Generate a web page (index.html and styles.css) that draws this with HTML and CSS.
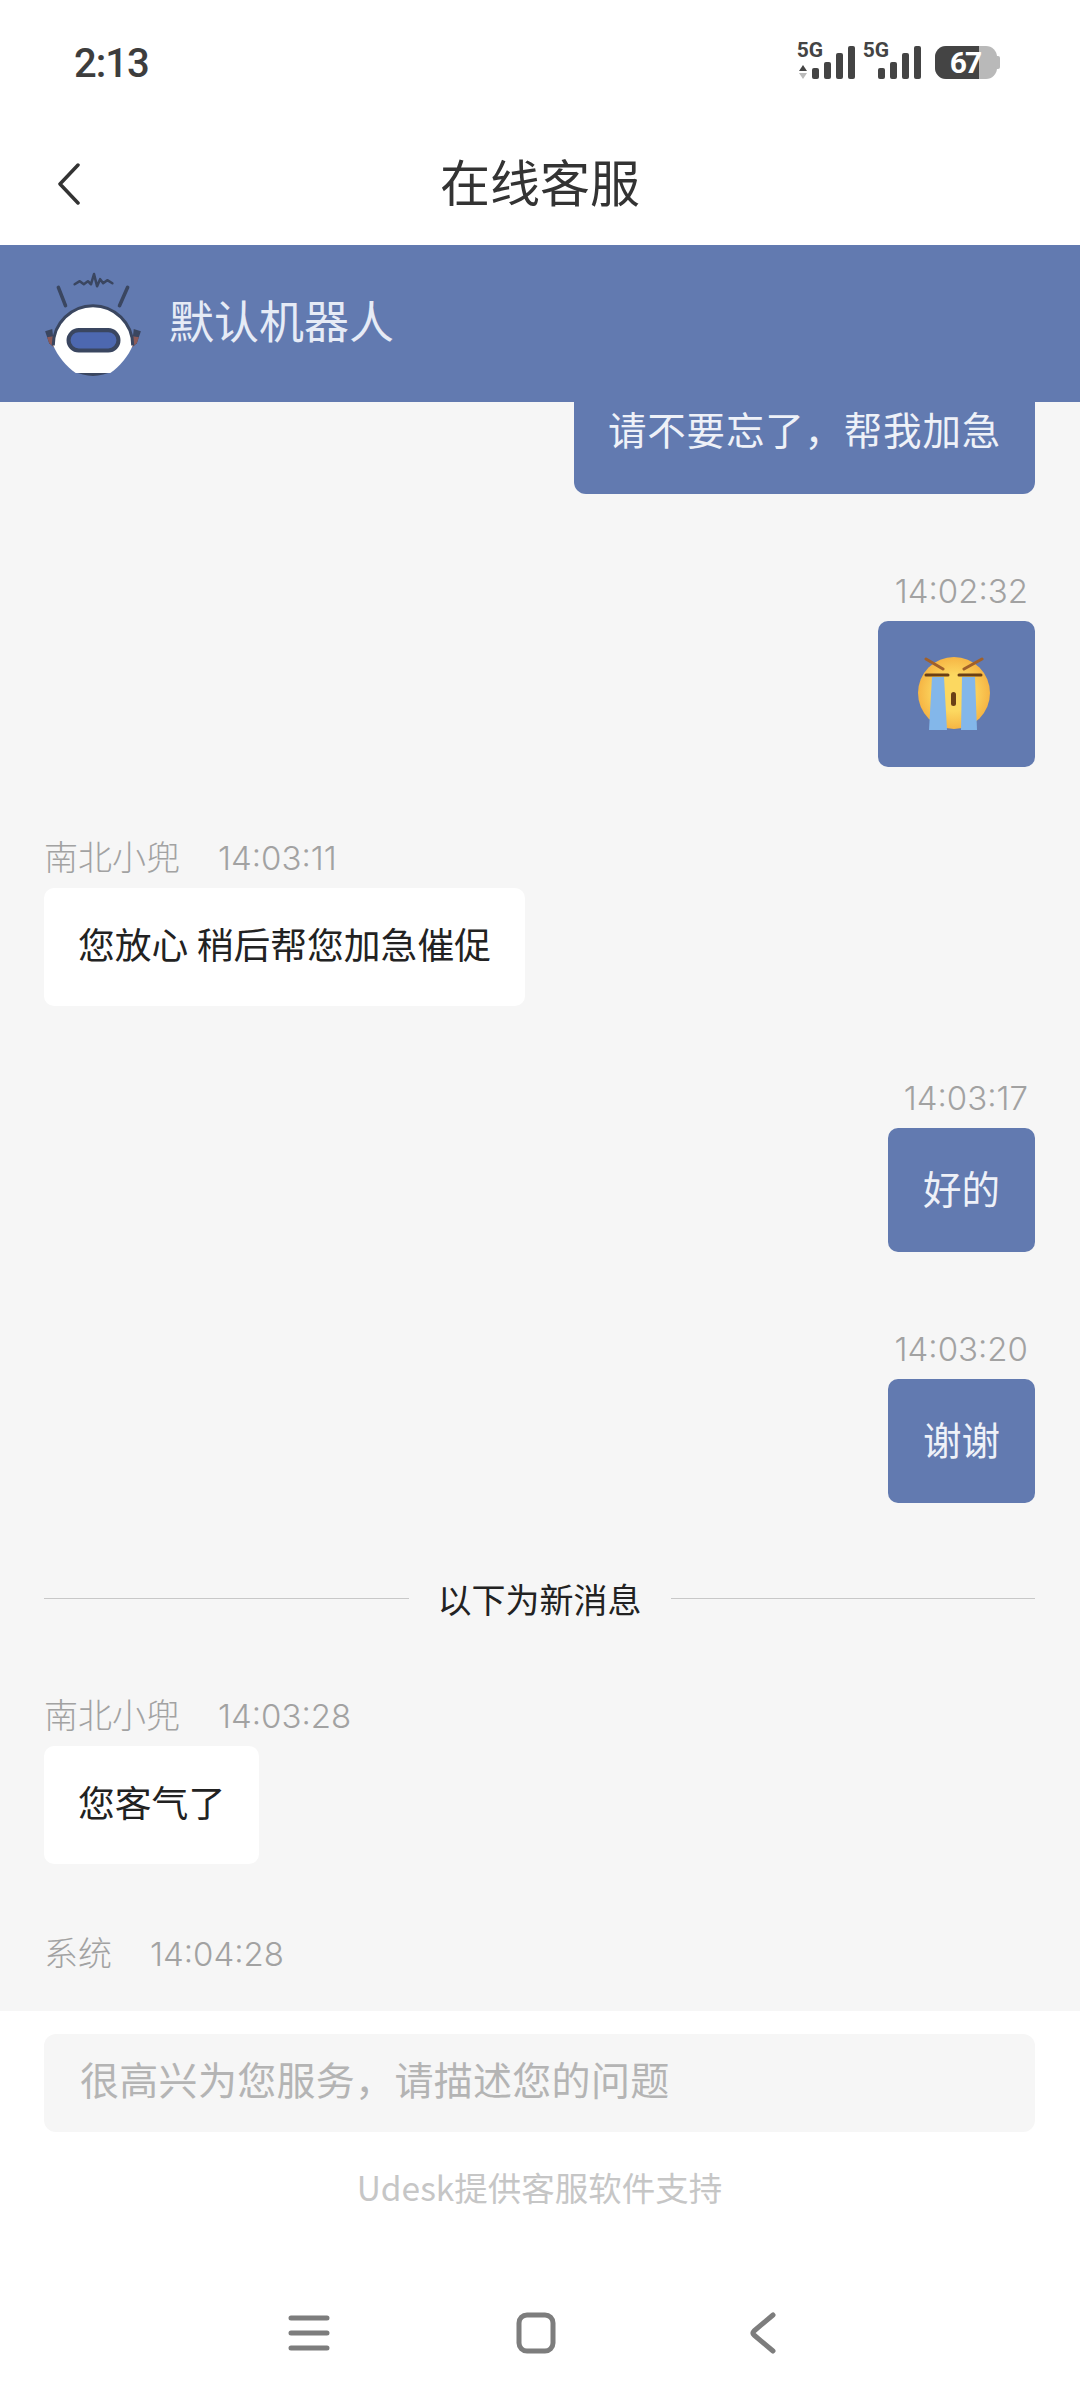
FILE: index.html
```html
<html>
<head>
	<meta charset="utf-8">
	<link rel="stylesheet" href="styles.css">
</head>

<body>
	<div class="status-bar">
		<span class="clock">2:13</span>
		<svg class="status-icons" width="220" height="56" viewBox="0 -12 220 56">
			<text x="20" y="17" class="net-label">5G</text>
			<path d="M13 25l4 6H9z" fill="#444"/>
			<path d="M13 39l4-6H9z" fill="#bbb"/>
			<rect x="22" y="28" width="7" height="11" rx="2" fill="#444"/>
			<rect x="34" y="22" width="7" height="17" rx="2" fill="#444"/>
			<rect x="46" y="13" width="7" height="26" rx="2" fill="#444"/>
			<rect x="58" y="6" width="7" height="33" rx="2" fill="#444"/>
			<text x="86" y="17" class="net-label">5G</text>
			<rect x="88" y="28" width="7" height="11" rx="2" fill="#444"/>
			<rect x="100" y="22" width="7" height="17" rx="2" fill="#444"/>
			<rect x="112" y="13" width="7" height="26" rx="2" fill="#444"/>
			<rect x="124" y="6" width="7" height="33" rx="2" fill="#444"/>
			<rect x="145" y="6" width="62" height="33" rx="11" fill="#b9b9b9"/>
			<path d="M156 6h33v33h-33a11 11 0 0 1-11-11v-11a11 11 0 0 1 11-11z" fill="#444"/>
			<rect x="205" y="16" width="5" height="13" rx="2" fill="#b9b9b9"/>
			<text x="175" y="33" class="batt-label">67</text>
		</svg>
	</div>

	<div class="title-bar">
		<svg class="back" width="24" height="42" viewBox="0 0 24 42">
			<path d="M21 2L3 21l18 19" fill="none" stroke="#333" stroke-width="3.5" stroke-linecap="round" stroke-linejoin="round"/>
		</svg>
		<h1>在线客服</h1>
	</div>

	<div class="agent-bar">
		<svg class="robot" width="98" height="108" viewBox="0 0 96 106">
			<path d="M14 17l7 18M82 17l-8 18" stroke="#3a4660" stroke-width="3.5" stroke-linecap="round"/>
			<path d="M30 14l5-3 4 3 4-3 3 3 3-10 3 12 3-7 3 4 4-3 5 3" fill="none" stroke="#3a4660" stroke-width="2.5" stroke-linecap="round" stroke-linejoin="round"/>
			<path d="M1 60l7-2 2 18-5-4z" fill="#3a4660"/>
			<path d="M95 60l-7-2-2 18 5-4z" fill="#3a4660"/>
			<path d="M3 66l6-1 1 11-5-4zM93 66l-6-1-1 11 5-4z" fill="#8c5a58"/>
			<path d="M28 99q20 10 40 0z" fill="#3a4660"/>
			<path d="M9 74C9 52 27 35 48 35s39 17 39 39c-4 10-13 21-22 27H31C22 95 13 84 9 74z" fill="#fff"/>
			<path d="M9 74C9 52 27 35 48 35s39 17 39 39" fill="none" stroke="#3a4660" stroke-width="3"/>
			<rect x="24" y="59" width="49" height="20" rx="10" fill="#4d68b0" stroke="#3a4660" stroke-width="4"/>
		</svg>
		<span class="agent-name">默认机器人</span>
	</div>

	<div class="chat">
		<div class="msg mine first">
			<div class="bubble cut">请不要忘了，帮我加急</div>
		</div>

		<div class="msg mine wide-gap">
			<div class="meta">14:02:32</div>
			<div class="bubble emoji">
				<svg width="74" height="74" viewBox="0 0 74 74">
					<defs>
						<radialGradient id="face" cx="0.5" cy="0.5" r="0.5">
							<stop offset="0.5" stop-color="#fcd860"/>
							<stop offset="1" stop-color="#f6b544"/>
						</radialGradient>
					</defs>
					<circle cx="37" cy="36" r="36" fill="url(#face)"/>
					<path d="M9 2l17 10M65 2L47 12" stroke="#a0602a" stroke-width="3" stroke-linecap="round"/>
					<path d="M9 18h22M42 18h22" stroke="#6b4016" stroke-width="3" stroke-linecap="round"/>
					<path d="M15 20h12l3 53H12z M45 20h13l2 53H44z" fill="#83b7ea"/>
					<rect x="34" y="35" width="5" height="14" rx="2.5" fill="#6b4016"/>
				</svg>
			</div>
		</div>

		<div class="msg theirs">
			<div class="meta"><span class="sender">南北小兜</span>14:03:11</div>
			<div class="bubble">您放心 稍后帮您加急催促</div>
		</div>

		<div class="msg mine">
			<div class="meta">14:03:17</div>
			<div class="bubble">好的</div>
		</div>

		<div class="msg mine wide-gap">
			<div class="meta">14:03:20</div>
			<div class="bubble">谢谢</div>
		</div>

		<div class="divider"><span>以下为新消息</span></div>

		<div class="msg theirs after-divider">
			<div class="meta"><span class="sender">南北小兜</span>14:03:28</div>
			<div class="bubble">您客气了</div>
		</div>

		<div class="msg theirs system">
			<div class="meta"><span class="sender">系统</span>14:04:28</div>
		</div>
	</div>

	<div class="footer">
		<div class="input-box">很高兴为您服务，请描述您的问题</div>
		<div class="powered">Udesk提供客服软件支持</div>
		<div class="nav-bar">
			<svg width="42" height="38" viewBox="0 0 42 38">
				<path d="M3 4h36M3 19h36M3 34h36" stroke="#7d7d7d" stroke-width="5" stroke-linecap="round"/>
			</svg>
			<svg class="nav-home" width="40" height="42" viewBox="0 0 40 42">
				<rect x="3" y="3" width="34" height="36" rx="8" fill="none" stroke="#7d7d7d" stroke-width="5"/>
			</svg>
			<svg class="nav-back" width="26" height="42" viewBox="0 0 26 42">
				<path d="M23 3L4 19q-2 2 0 4l19 16" fill="none" stroke="#7d7d7d" stroke-width="5" stroke-linecap="round" stroke-linejoin="round"/>
			</svg>
		</div>
	</div>
</body>

</html>
```

FILE: styles.css
```css
body {
	margin: 0;
	width: 1080px;
	height: 2400px;
	overflow: hidden;
	background: #fff;
	font-family: "Noto Sans CJK SC", "Noto Sans", sans-serif;
}

.status-bar {
	height: 122px;
	box-sizing: border-box;
	padding: 41px 70px 0 74px;
	display: flex;
	justify-content: space-between;
	align-items: flex-start;
}

.status-icons {
	margin-top: -13px;
}

.clock {
	font-family: Roboto, sans-serif;
	font-weight: 500;
	font-size: 40px;
	line-height: 46px;
	letter-spacing: -1px;
	color: #3d3d3d;
}

.net-label {
	font-family: Roboto, sans-serif;
	font-weight: 700;
	font-size: 21px;
	text-anchor: middle;
	fill: #444;
}

.batt-label {
	font-family: Roboto, sans-serif;
	font-weight: 700;
	font-size: 30px;
	letter-spacing: -2px;
	text-anchor: middle;
	fill: #fff;
}

.title-bar {
	height: 123px;
	box-sizing: border-box;
	padding-bottom: 8px;
	position: relative;
	display: flex;
	align-items: center;
	justify-content: center;
}

.title-bar h1 {
	margin: 0;
	font-size: 50px;
	font-weight: 400;
	color: #333;
}

.back {
	position: absolute;
	left: 57px;
	top: 41px;
}

.agent-bar {
	height: 157px;
	box-sizing: border-box;
	padding-left: 44px;
	display: flex;
	align-items: center;
	background: #627ab0;
}

.agent-name {
	margin-left: 27px;
	margin-bottom: 8px;
	font-size: 45px;
	color: #e6ebf6;
}

.chat {
	height: 1609px;
	box-sizing: border-box;
	padding: 0 45px 0 44px;
	background: #f6f6f6;
}

.msg {
	display: flex;
	flex-direction: column;
	margin-top: 77px;
}

.msg.first {
	margin-top: 0;
}

.msg.theirs {
	margin-top: 74px;
}

.msg.wide-gap {
	margin-top: 82px;
}

.msg.after-divider {
	margin-top: 81px;
}

.msg.system {
	margin-top: 73px;
}

.mine {
	align-items: flex-end;
}

.theirs {
	align-items: flex-start;
}

.meta {
	height: 30px;
	line-height: 30px;
	margin-bottom: 15px;
	font-family: Inter, "Noto Sans CJK SC", sans-serif;
	font-size: 33px;
	font-weight: 300;
	color: #a2a2a2;
}

.mine .meta {
	padding-right: 7px;
}

.theirs .meta {
	margin-bottom: 17px;
}

.sender {
	margin-right: 38px;
	font-size: 34px;
	font-family: "Noto Sans CJK SC", sans-serif;
}

.bubble {
	box-sizing: border-box;
	height: 118px;
	padding: 0 34px 8px;
	display: flex;
	align-items: center;
	font-size: 36.8px;
	color: #222;
	background: #fff;
	border-radius: 10px;
}

.mine .bubble {
	height: 124px;
	padding: 0 35px 6px;
	font-size: 38.5px;
	color: #eef1f8;
	background: #627ab0;
}

.mine .bubble.cut {
	height: 92px;
	padding: 0 34px 40px;
	line-height: 40px;
	letter-spacing: 0.8px;
	border-radius: 0 0 12px 12px;
}

.mine .bubble.emoji {
	height: 146px;
	padding: 0 44px 0 39px;
}

.divider {
	margin-top: 75px;
	height: 40px;
	display: flex;
	align-items: center;
	font-size: 34px;
	color: #222;
}

.divider::before,
.divider::after {
	content: "";
	flex: 1;
	height: 1px;
	background: #c8c8c8;
}

.divider span {
	margin: 0 29px;
}

.footer {
	height: 389px;
	box-sizing: border-box;
	padding: 23px 45px 0 44px;
	background: #fff;
}

.input-box {
	height: 98px;
	line-height: 88px;
	padding-left: 36px;
	font-size: 39px;
	letter-spacing: 0.3px;
	color: #b4b4b4;
	background: #f6f6f6;
	border-radius: 12px;
}

.powered {
	margin-top: 30px;
	text-align: center;
	font-size: 33.5px;
	line-height: 50px;
	color: #c6c6c6;
}

.nav-bar {
	margin-top: 100px;
	padding-left: 244px;
	display: flex;
	align-items: center;
}

.nav-home {
	margin-left: 186px;
}

.nav-back {
	margin-left: 194px;
}
```
